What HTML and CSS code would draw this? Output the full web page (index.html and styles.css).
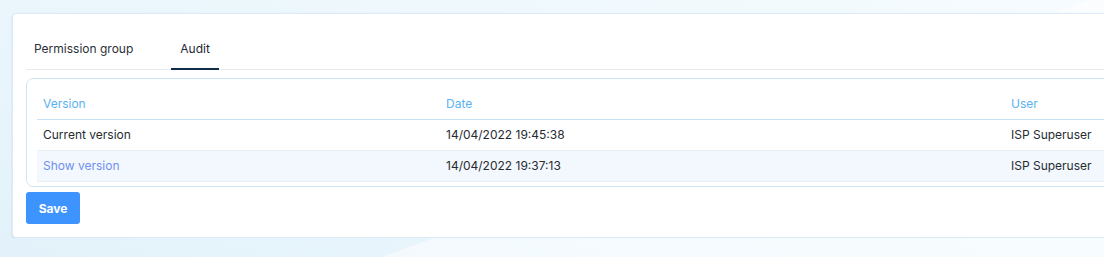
FILE: index.html
```html
<!DOCTYPE html>
<html>
<head>
<meta charset="utf-8">
<link rel="stylesheet" href="styles.css">
</head>
<body>
<div class="page">
  <div class="card">
    <div class="tabs">
      <div class="tab">Permission group</div>
      <div class="tab active">Audit</div>
    </div>
    <div class="table-box">
      <div class="row head">
        <div class="cell">Version</div>
        <div class="cell">Date</div>
        <div class="cell">User</div>
      </div>
      <div class="row">
        <div class="cell">Current version</div>
        <div class="cell">14/04/2022 19:45:38</div>
        <div class="cell">ISP Superuser</div>
      </div>
      <div class="row alt">
        <div class="cell link">Show version</div>
        <div class="cell">14/04/2022 19:37:13</div>
        <div class="cell">ISP Superuser</div>
      </div>
    </div>
    <button class="save">Save</button>
  </div>
</div>
</body>
</html>
```

FILE: styles.css
```css
html, body {
  margin: 0;
  padding: 0;
  height: 257px;
  overflow: hidden;
}
body {
  font-family: Inter, "Noto Sans", sans-serif;
  background:
    linear-gradient(160deg, rgba(255,255,255,0) 0%, rgba(255,255,255,0) 60%, rgba(255,255,255,0.5) 60.2%, rgba(255,255,255,0.5) 100%),
    linear-gradient(200deg, #f6fbfe 0%, #eef8fd 40%, #e3f2fa 100%);
}
.page {
  padding: 13px 0 0 12px;
  width: 1092px;
  overflow: hidden;
}
.card {
  width: 1200px;
  height: 225px;
  box-sizing: border-box;
  background: #fff;
  border: 1px solid #dcebf5;
  border-radius: 4px;
  box-shadow: 0 1px 2px rgba(140, 185, 215, 0.45);
  padding: 23px 0 0 13px;
}
.tabs {
  display: flex;
  border-bottom: 1px solid #e9ecef;
  height: 33px;
  box-sizing: border-box;
}
.tab {
  font-size: 12px;
  color: #2a2f36;
  padding: 4px 8px 0;
  margin-right: 30px;
  line-height: 15px;
}
.tab.active {
  border-bottom: 2px solid #102c48;
  padding: 4px 9px 0;
  margin-bottom: -1px;
  color: #1d2733;
}
.table-box {
  margin-top: 8px;
  border: 1px solid #cfe5f6;
  border-radius: 7px;
  padding: 10px 0 4px 10px;
  height: 109px;
  box-sizing: border-box;
}
.row {
  display: grid;
  grid-template-columns: 403px 565px 1fr;
  height: 30px;
  align-items: center;
  border-bottom: 1px solid #e8eef4;
  font-size: 12px;
  color: #262b31;
}
.row.head {
  color: #5ab2f2;
  border-bottom: 1px solid #c7e1f5;
}
.row.alt {
  background: #f3f8fe;
}
.cell {
  padding-left: 6px;
  padding-bottom: 2px;
  white-space: nowrap;
}
.link {
  color: #6f8ff0;
}
.save {
  margin-top: 5px;
  width: 54px;
  height: 32px;
  border: none;
  border-radius: 3px;
  background: #3d94ff;
  color: #fff;
  font-family: Inter, "Noto Sans", sans-serif;
  font-weight: 700;
  font-size: 12px;
  padding: 0;
}
```
